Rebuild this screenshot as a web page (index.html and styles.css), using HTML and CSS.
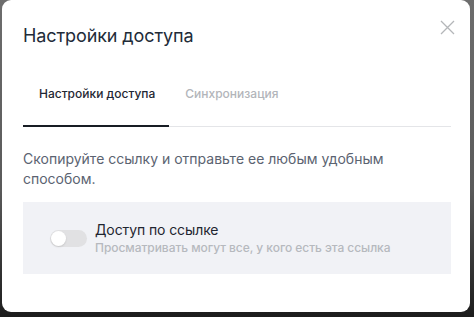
FILE: index.html
```html
<!DOCTYPE html>
<html lang="ru">
<head>
<meta charset="utf-8">
<link rel="stylesheet" href="styles.css">
</head>
<body>
<div class="modal">
  <h1 class="title">Настройки доступа</h1>
  <button class="close" aria-label="Закрыть">
    <svg width="15" height="15" viewBox="0 0 15 15"><path d="M1 1L14 14M14 1L1 14" stroke="#b4b6b9" stroke-width="1.3" fill="none"/></svg>
  </button>
  <div class="tabs">
    <div class="tab active">Настройки доступа</div>
    <div class="tab">Синхронизация</div>
  </div>
  <p class="desc">Скопируйте ссылку и отправьте ее любым удобным способом.</p>
  <div class="box">
    <div class="toggle"><div class="knob"></div></div>
    <div class="info">
      <div class="label">Доступ по ссылке</div>
      <div class="hint">Просматривать могут все, у кого есть эта ссылка</div>
    </div>
  </div>
</div>
</body>
</html>
```
FILE: styles.css
```css
html, body {
  margin: 0;
  height: 100%;
}
body {
  background: linear-gradient(#6d6d6d 0%, #5a5a5a 60%, #1c1c1c 100%);
  padding: 0 4px 5px 2px;
  box-sizing: border-box;
  font-family: Inter, "Noto Sans", sans-serif;
}
.modal {
  position: relative;
  background: #fff;
  width: 468px;
  height: 312px;
  border-radius: 9px;
  padding: 24px 19px 0 21px;
  box-sizing: border-box;
}
.title {
  margin: 0;
  font-size: 18px;
  line-height: 24px;
  font-weight: 400;
  color: #222b38;
  letter-spacing: -0.1px;
}
.close {
  position: absolute;
  top: 20px;
  right: 15px;
  width: 15px;
  height: 15px;
  padding: 0;
  border: 0;
  background: none;
  display: flex;
}
.tabs {
  display: flex;
  margin-top: 14px;
  border-bottom: 1px solid #e4e5e8;
}
.tab {
  padding: 24px 14px 23px 16px;
  font-size: 12px;
  line-height: 16px;
  color: #b2b5ba;
  font-weight: 500;
  margin-bottom: -1px;
  border-bottom: 2px solid transparent;
}
.tab.active {
  color: #1f2733;
  border-bottom-color: #181d24;
}
.desc {
  margin: 22px 0 0;
  font-size: 14px;
  line-height: 20px;
  color: #5b6371;
  width: 400px;
}
.box {
  margin-top: 13px;
  background: #f1f2f6;
  height: 72px;
  box-sizing: border-box;
  padding: 19px 20px 0 27px;
  display: flex;
  align-items: flex-start;
}
.toggle {
  width: 37px;
  height: 17px;
  border-radius: 9px;
  background: #e1e1e3;
  margin-top: 9px;
  position: relative;
  flex: none;
}
.knob {
  position: absolute;
  left: 1px;
  top: 1px;
  width: 15px;
  height: 15px;
  border-radius: 50%;
  background: #fff;
  box-shadow: 0 1px 2px rgba(0,0,0,0.12);
}
.info {
  margin-left: 8px;
}
.label {
  font-size: 14px;
  line-height: 18px;
  color: #1f2630;
  letter-spacing: -0.1px;
}
.hint {
  font-size: 12px;
  line-height: 18px;
  color: #b6b9be;
  font-weight: 500;
  letter-spacing: -0.05px;
}
```
